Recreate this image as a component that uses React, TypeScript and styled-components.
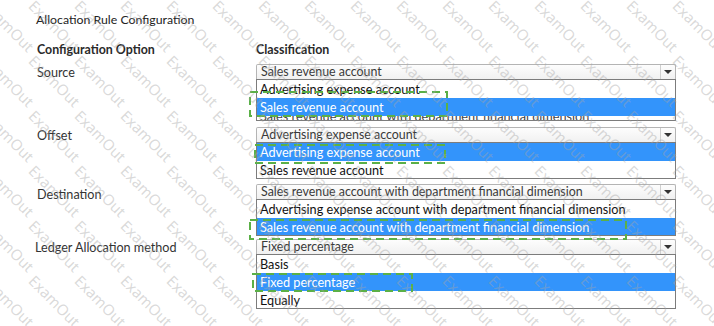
import styled, { createGlobalStyle } from "styled-components";

const GlobalStyle = createGlobalStyle`
    body {
        margin: 0;
        background: #fff;
    }
`;

const Page = styled.div`
    position: relative;
    width: 714px;
    height: 326px;
    overflow: hidden;
    background: #fff;
    font-family: Lato, "Noto Sans", sans-serif;
    color: #222;
    padding-left: 37px;
    box-sizing: border-box;
`;

const Title = styled.div`
    margin: 12px 0 0 -1px;
    height: 16px;
    line-height: 16px;
    font-size: 12.3px;
`;

const HeaderRow = styled.div`
    display: grid;
    grid-template-columns: 219px 420px;
    margin-top: 14px;
    height: 16px;
    line-height: 16px;
    font-size: 12.4px;
    font-weight: 700;
    color: #2a2a2a;
`;

const Rows = styled.div`
    display: flex;
    flex-direction: column;
`;

const Row = styled.div<{ $gap: number }>`
    display: grid;
    grid-template-columns: 219px 420px;
    align-items: start;
    margin-top: ${(p) => p.$gap}px;
`;

const Label = styled.div<{ $shift?: number; $drop?: number }>`
    height: 15px;
    line-height: 15px;
    padding-top: ${(p) => 1 + (p.$drop || 0)}px;
    margin-left: ${(p) => p.$shift || 0}px;
    font-size: 12.6px;
    color: #333;
`;

const Dropdown = styled.div`
    position: relative;
    display: flex;
    flex-direction: column;
`;

const Select = styled.div`
    height: 15px;
    box-sizing: border-box;
    display: flex;
    align-items: center;
    border: 1px solid #b4b4b4;
    border-bottom: 0;
    border-radius: 2px 2px 0 0;
    background: linear-gradient(#fdfdfd, #f1f1f1);
    font-size: 12.4px;
    color: #3a3a3a;
`;

const SelectText = styled.span`
    flex: 1;
    padding-left: 4px;
    white-space: nowrap;
    line-height: 14px;
`;

const ArrowBox = styled.span`
    width: 14px;
    height: 100%;
    border-left: 1px solid #cfcfcf;
    display: flex;
    align-items: center;
    justify-content: center;
    &::after {
        content: "";
        border-left: 4px solid transparent;
        border-right: 4px solid transparent;
        border-top: 4px solid #333;
    }
`;

const List = styled.div<{ $height: number }>`
    height: ${(p) => p.$height}px;
    box-sizing: border-box;
    overflow: hidden;
    border: 1px solid #7c7c7c;
    background: #fff;
`;

const Option = styled.div<{ $selected?: boolean }>`
    position: relative;
    z-index: ${(p) => (p.$selected ? 1 : 0)};
    height: 18px;
    line-height: 18px;
    padding-left: 3px;
    font-size: 12.7px;
    white-space: nowrap;
    color: ${(p) => (p.$selected ? "#fff" : "#111")};
    background: ${(p) => (p.$selected ? "#3394fb" : "#fff")};
`;

const HiddenOption = styled(Option)`
    margin-top: -9px;
    color: #444;
`;

const Marker = styled.svg<{ $left: number; $top: number }>`
    position: absolute;
    left: ${(p) => p.$left}px;
    top: ${(p) => p.$top}px;
    overflow: visible;
    z-index: 2;
`;

const Watermark = styled.div`
    position: absolute;
    left: -14px;
    top: -2px;
    display: grid;
    grid-template-columns: repeat(17, 46px);
    grid-auto-rows: 55px;
    pointer-events: none;
    z-index: 3;
`;

const Mark = styled.span`
    display: flex;
    align-items: center;
    justify-content: center;
    transform: rotate(45deg);
    font-family: "Noto Sans", sans-serif;
    font-size: 15px;
    color: rgba(165, 165, 165, 0.42);
    white-space: nowrap;
`;

interface IMarkerBox {
    left: number;
    top: number;
    width: number;
    height: number;
}

interface IRule {
    label: string;
    value: string;
    options: string[];
    selected: number;
    gap: number;
    listHeight: number;
    labelShift?: number;
    labelDrop?: number;
    hiddenTail?: string;
    box: IMarkerBox;
}

const rules: IRule[] = [
    {
        label: "Source",
        value: "Sales revenue account",
        options: ["Advertising expense account", "Sales revenue account"],
        selected: 1,
        gap: 6,
        listHeight: 42,
        hiddenTail: "Sales revenue account with department financial dimension",
        box: { left: -7, top: 27, width: 199, height: 26 },
    },
    {
        label: "Offset",
        value: "Advertising expense account",
        options: ["Advertising expense account", "Sales revenue account"],
        selected: 0,
        gap: 6,
        listHeight: 37,
        box: { left: -2, top: 17, width: 192, height: 20 },
    },
    {
        label: "Destination",
        value: "Sales revenue account with department financial dimension",
        options: [
            "Advertising expense account with department financial dimension",
            "Sales revenue account with department financial dimension",
        ],
        selected: 1,
        gap: 5,
        listHeight: 37,
        labelDrop: 2,
        box: { left: -7, top: 35, width: 378, height: 21 },
    },
    {
        label: "Ledger Allocation method",
        value: "Fixed percentage",
        options: ["Basis", "Fixed percentage", "Equally"],
        selected: 1,
        gap: 3,
        listHeight: 55,
        labelShift: -2,
        box: { left: -4, top: 34, width: 161, height: 19 },
    },
];

function DashedBox({ left, top, width, height }: IMarkerBox) {
    return (
        <Marker $left={left} $top={top} width={width} height={height}>
            <rect x="1" y="1" width={width - 2} height={height - 2} fill="none"
                stroke="#5bb047" strokeWidth="2" strokeDasharray="8 5" />
        </Marker>
    );
}

function App() {
    return (
        <Page>
            <GlobalStyle />
            <Title>Allocation Rule Configuration</Title>
            <HeaderRow>
                <span>Configuration Option</span>
                <span>Classification</span>
            </HeaderRow>
            <Rows>
                {rules.map((rule) => (
                    <Row key={rule.label} $gap={rule.gap}>
                        <Label $shift={rule.labelShift} $drop={rule.labelDrop}>{rule.label}</Label>
                        <Dropdown>
                            <Select>
                                <SelectText>{rule.value}</SelectText>
                                <ArrowBox />
                            </Select>
                            <List $height={rule.listHeight}>
                                {rule.options.map((opt, i) => (
                                    <Option key={opt} $selected={i === rule.selected}>{opt}</Option>
                                ))}
                                {rule.hiddenTail && <HiddenOption>{rule.hiddenTail}</HiddenOption>}
                            </List>
                            <DashedBox {...rule.box} />
                        </Dropdown>
                    </Row>
                ))}
            </Rows>
            <Watermark>
                {Array.from({ length: 17 * 7 }).map((_, i) => (
                    <Mark key={i}>ExamOut</Mark>
                ))}
            </Watermark>
        </Page>
    );
}

export default App;
